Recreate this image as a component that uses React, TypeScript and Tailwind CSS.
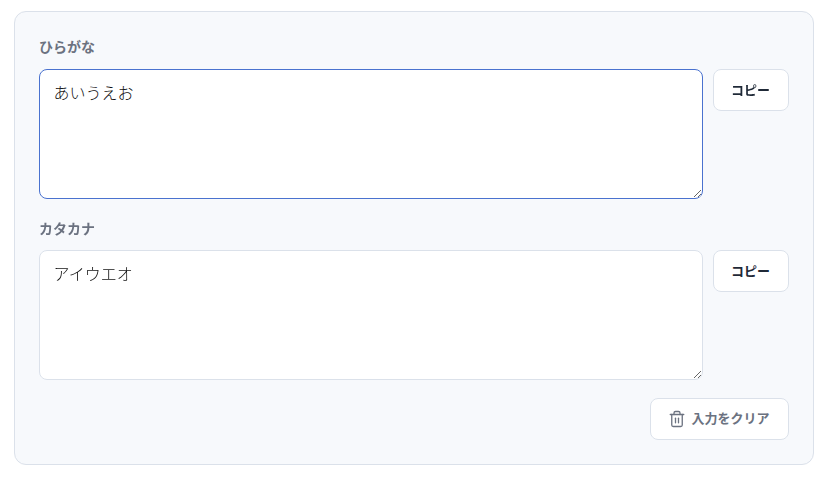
import { useState } from "react"
import { Trash2 } from "lucide-react"

const FONT = "font-['Inter','Noto_Sans_CJK_JP',sans-serif]"

export default function App() {
  const [hiragana, setHiragana] = useState("あいうえお")
  const [katakana, setKatakana] = useState("アイウエオ")

  return (
    <div className={`min-h-[480px] bg-white px-[14px] pt-[11px] ${FONT}`}>
      <div className="w-[800px] rounded-xl border border-[#dbe1ea] bg-[#f7f9fc] px-6 pt-6 pb-6">
        {/* Hiragana */}
        <label className="mb-3 block text-sm leading-[21px] font-bold text-[#6b7280]">ひらがな</label>
        <div className="flex items-start gap-[10px]">
          <textarea
            autoFocus
            value={hiragana}
            onChange={(e) => setHiragana(e.target.value)}
            className="block h-[130px] w-[664px] rounded-lg border border-[#4a72cf] bg-white px-[13.5px] py-[10px] text-base leading-6 font-light text-[#111111] outline-none font-['Noto_Sans_CJK_JP',sans-serif]"
          />
          <button className="h-[42px] w-[76px] rounded-lg border border-[#dbe1ea] bg-white pt-px pr-px text-[13px] font-bold text-[#1f2937]">
            コピー
          </button>
        </div>

        {/* Katakana */}
        <label className="mt-[21px] mb-[13px] block text-sm leading-[17px] font-bold text-[#6b7280]">カタカナ</label>
        <div className="flex items-start gap-[10px]">
          <textarea
            value={katakana}
            onChange={(e) => setKatakana(e.target.value)}
            className="block h-[130px] w-[664px] rounded-lg border border-[#dbe1ea] bg-white px-[13.5px] py-[10px] text-base leading-6 font-light text-[#111111] outline-none font-['Noto_Sans_CJK_JP',sans-serif]"
          />
          <button className="h-[42px] w-[76px] rounded-lg border border-[#dbe1ea] bg-white pt-px pr-px text-[13px] font-bold text-[#1f2937]">
            コピー
          </button>
        </div>

        <div className="mt-[18px] flex justify-end">
          <button className="flex h-[42px] w-[139px] items-center justify-center gap-[5px] rounded-lg border border-[#dbe1ea] bg-white pr-px text-[13px] font-bold text-[#6b7280]">
            <Trash2 size={18} strokeWidth={1.75} />
            入力をクリア
          </button>
        </div>
      </div>
    </div>
  )
}
